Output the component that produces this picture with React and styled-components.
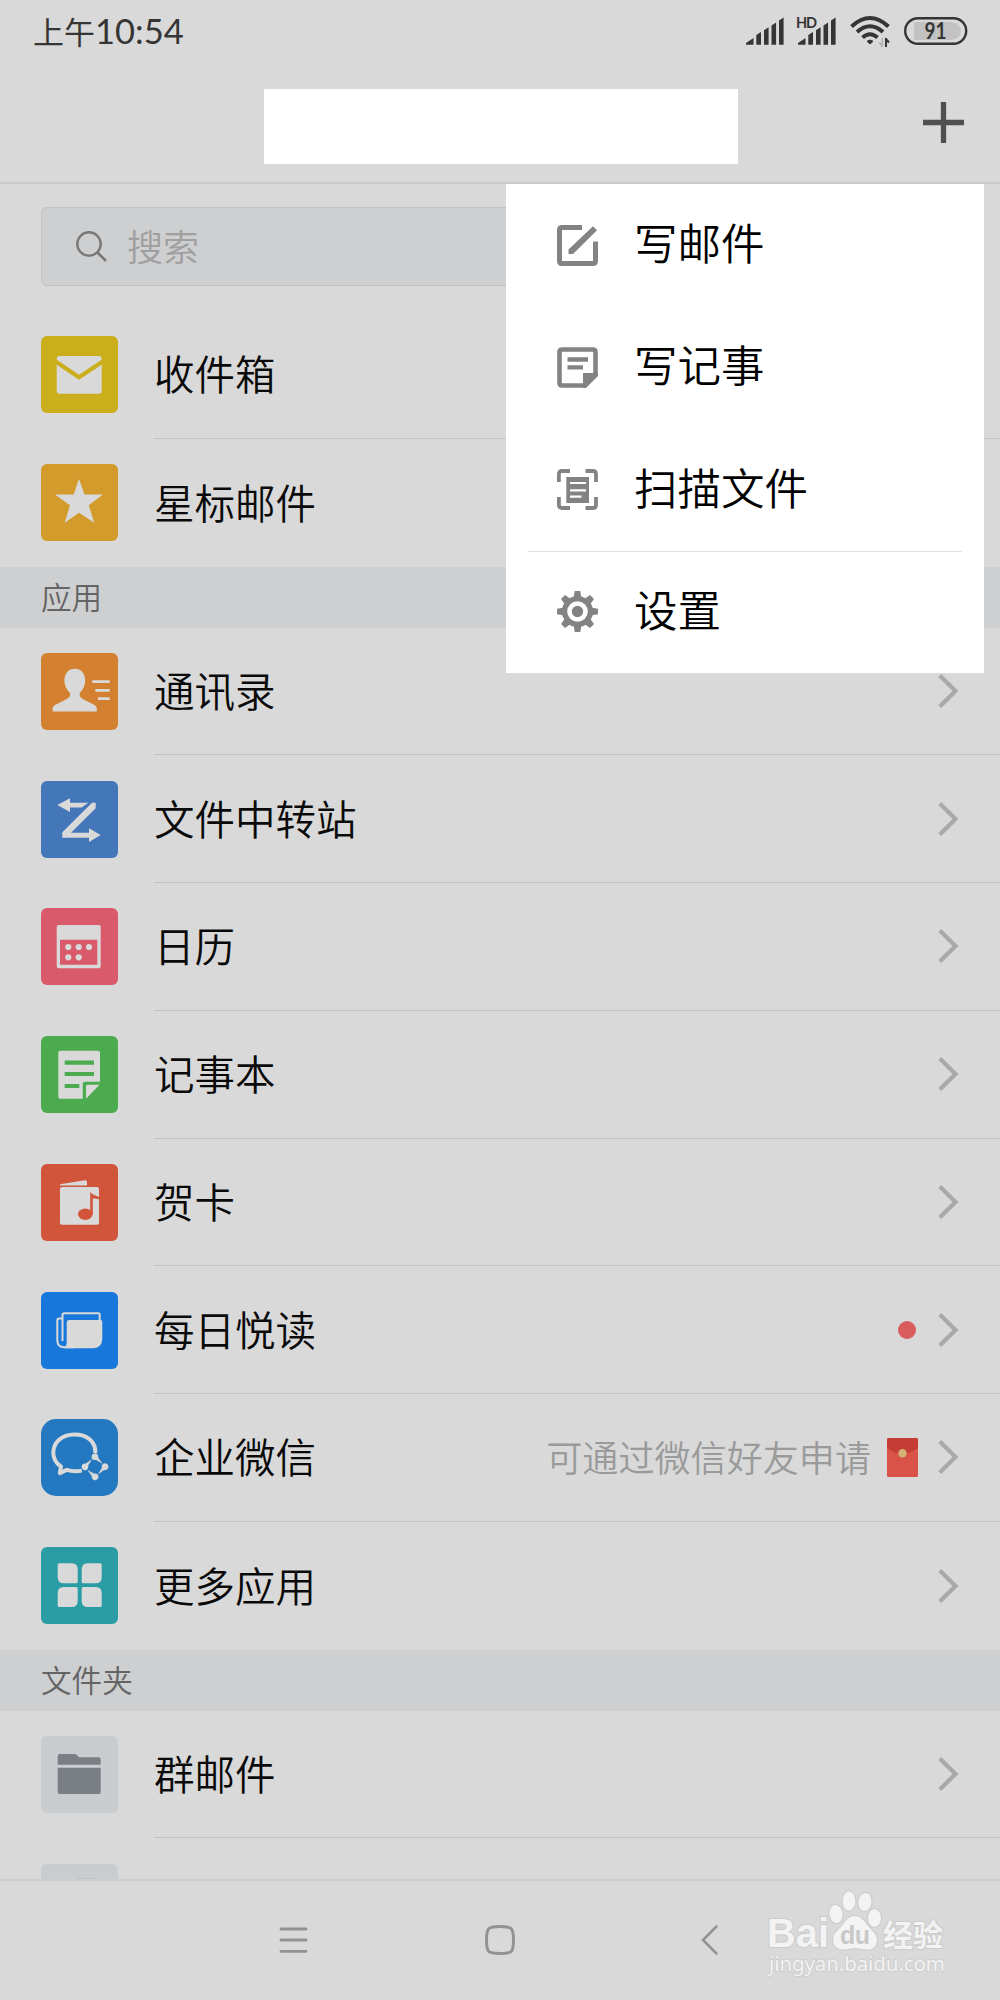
import styled, { createGlobalStyle } from "styled-components";

const GlobalStyle = createGlobalStyle`
  * {
    box-sizing: border-box;
  }
  body {
    margin: 0;
    background: #d9d9d9;
    font-family: "Noto Sans CJK SC", sans-serif;
    font-weight: 350;
  }
  svg {
    display: block;
    flex-shrink: 0;
  }
`;

const Screen = styled.div`
  position: relative;
  display: flex;
  flex-direction: column;
  width: 1000px;
  height: 2000px;
  overflow: hidden;
  background: #d9d9d9;
  color: #0a0a0a;
`;

const StatusBar = styled.div`
  display: flex;
  align-items: center;
  justify-content: space-between;
  height: 62px;
  padding: 0 32px 0 33px;
  color: #353535;
`;

const Clock = styled.div`
  display: flex;
  align-items: baseline;
  font-size: 31px;
  line-height: 62px;
  font-weight: 400;
`;

const Digits = styled.span`
  font-family: Lato, sans-serif;
  font-size: 34.5px;
`;

const StatusIcons = styled.div`
  display: flex;
  align-items: center;
`;

const Header = styled.header`
  display: flex;
  align-items: center;
  justify-content: space-between;
  height: 122px;
  padding: 6px 36px 5px 264px;
  border-bottom: 2px solid #c8c8c8;
`;

const TitleBlock = styled.div`
  width: 474px;
  height: 75px;
  margin-top: 8px;
  background: #fff;
`;

const Content = styled.main`
  flex: 1;
  min-height: 0;
  overflow: hidden;
`;

const SearchBox = styled.div`
  display: flex;
  align-items: center;
  gap: 20px;
  height: 79px;
  margin: 23px 41px 25px;
  padding: 0 0 1px 34px;
  border: 1px solid #c2c3c5;
  border-radius: 6px;
  background: #cecfd1;
  color: #9f9f9f;
  font-size: 36px;
`;

const SearchHint = styled.span`
  line-height: 50px;
  padding-bottom: 2px;
`;

const Section = styled.h2`
  display: flex;
  align-items: center;
  height: 61px;
  margin: 0;
  padding: 0 0 3px 41px;
  background: #cecfd1;
  color: #646464;
  font-size: 30.6px;
  font-weight: 350;
`;

const Row = styled.div`
  display: flex;
  align-items: center;
  height: 127.75px;
  padding-left: 41px;
`;

const Tile = styled.div`
  width: 77px;
  height: 77px;
  flex-shrink: 0;
  margin-right: 36px;
  border-radius: ${({ $radius }) => $radius || 6}px;
  background: ${({ $color }) => $color};
`;

const RowBody = styled.div`
  display: flex;
  flex: 1;
  align-items: center;
  height: 100%;
  padding-right: 41px;
  border-bottom: ${({ $last }) => ($last ? "none" : "1px solid #c2c2c2")};
`;

const RowLabel = styled.span`
  flex: 1;
  padding-bottom: 2px;
  font-size: 40.5px;
  line-height: 60px;
`;

const Note = styled.span`
  margin-right: 16px;
  padding-bottom: 2px;
  color: #9a9a9a;
  font-size: 36.1px;
`;

const Dot = styled.span`
  width: 18px;
  height: 18px;
  margin-right: 22px;
  border-radius: 50%;
  background: #d95c5c;
`;

const NavBar = styled.nav`
  display: flex;
  align-items: center;
  height: 121px;
  padding: 0 0 2px 279px;
  border-top: 2px solid #cdcdcd;
`;

const Spacer = styled.div`
  width: ${({ $width }) => $width}px;
`;

const Menu = styled.div`
  position: absolute;
  top: 184px;
  left: 506px;
  width: 478px;
  height: 489px;
  background: #fff;
  color: #000;
`;

const MenuItem = styled.div`
  display: flex;
  align-items: center;
  height: 122.25px;
  padding: 0 0 0 51px;
  font-size: 43.5px;
  gap: 36px;
`;

const MenuLabel = styled.span`
  line-height: 60px;
  padding-bottom: 6px;
`;

const MenuDivider = styled.div`
  height: 1px;
  margin: 0 22px -1px;
  background: #e2e2e2;
`;

const Watermark = styled.div`
  position: absolute;
  right: 49px;
  bottom: 17px;
`;

const light = "#d9d9d9";

const glyphs = {
  inbox: (
    <>
      <rect x="15.7" y="20" width="45" height="37.7" rx="3" fill={light} />
      <path d="M14 25 38 41.200 62.500 25" fill="none" stroke="#cbae1c" strokeWidth="4.200" />
    </>
  ),
  star: (
    <path
      d="M38 15l5.500 15.500H62L47.700 41.300l5.600 17.400L38 48.700 23.700 58.700 29 41.300 14 30.500h18.700z"
      fill={light}
    />
  ),
  contacts: (
    <>
      <path
        d="M33.800 15.700c6.200 0 10.400 4.800 10.400 11.500 0 5.500-2.400 9.500-5.500 12.800-.4 3.300 1 5 4 6.500l8.800 4.500c3 1.500 4.300 2.500 4.300 4.500v3H11.700v-3c0-2 1.300-3 4.300-4.500l8.800-4.500c3-1.500 4.800-3.200 4.300-6.500-3.300-3.300-5.700-7.300-5.700-12.800 0-6.700 4.200-11.500 10.400-11.500z"
        fill={light}
      />
      <path d="M51.300 28.700h17.400M54.300 37.300h14.400M57 45.700h11.700" stroke={light} strokeWidth="2.800" />
    </>
  ),
  transfer: (
    <>
      <path d="M16.300 24 29 17.300v4.400h18.300l-6.600 4.700H29V31z" fill={light} />
      <path
        d="M51 21.700h3.700v5.600L30 51.700h18v-4.400L59.700 54 48 61v-4.300H21.300v-5.400z"
        fill={light}
      />
    </>
  ),
  calendar: (
    <>
      <path
        fillRule="evenodd"
        d="M17.700 17h40a2 2 0 0 1 2 2v39.300a2 2 0 0 1-2 2h-40a2 2 0 0 1-2-2V19a2 2 0 0 1 2-2zM19 31.700v25h37.300v-25z"
        fill={light}
      />
      {[[27.3, 39], [37.7, 39], [48, 39], [27.3, 49.3], [37.7, 49.3]].map(([x, y]) => (
        <circle key={`${x}-${y}`} cx={x} cy={y} r="3.1" fill={light} />
      ))}
    </>
  ),
  notes: (
    <>
      <path
        d="M19.300 14.700H57a2 2 0 0 1 2 2v29H44a2.300 2.300 0 0 0-2.300 2.300v14.700H19.300a2 2 0 0 1-2-2v-44a2 2 0 0 1 2-2z"
        fill={light}
      />
      <path d="M45 50q0-1.300 1.300-1.300H58.500L45 62.700z" fill={light} />
      <path d="M23.700 26.700H53M23.700 38H53M23.700 50h14.600" stroke="#4dab4f" strokeWidth="4.200" />
    </>
  ),
  card: (
    <>
      <path d="M19 20.300 44 16.300q2-.2 2 1.700v3.500H19z" fill={light} />
      <rect x="19" y="23" width="39" height="37.700" rx="2" fill={light} />
      <ellipse cx="44.300" cy="50.300" rx="7.300" ry="5.700" fill="#d1553b" />
      <path
        d="M49.200 28c1.500 2.500 4.800 3 8.800 5v2.300c-2.500-.5-4-1-6.200-.9v16h-2.600z"
        fill="#d1553b"
      />
    </>
  ),
  daily: (
    <>
      <path
        d="M21 26.500h-2.800q-1.900 0-1.900 2V48q0 7.200 7 7.200h10M21.500 49V23q0-1.700 1.700-1.700h34q1.500 0 1.500 1.700v6"
        fill="none"
        stroke={light}
        strokeWidth="2"
      />
      <path
        d="M25.700 30.500q0-2.500 2.500-2.500h31.500q1.600 0 1.600 2v16q0 10.300-10 10.300H23c2-1.500 2.700-3.500 2.700-7z"
        fill={light}
      />
    </>
  ),
  wework: (
    <>
      <path
        d="M54.300 34C55 22.500 46 15.500 33.500 15.500 20 15.500 12.300 24 12.300 34c0 6 3 10.300 7.700 13.700l-1.200 6.500 7-3.300c4.200 1.400 10 1.600 15 .7"
        fill="none"
        stroke={light}
        strokeWidth="4"
        strokeLinejoin="round"
      />
      {[0, 90, 180, 270].map((angle) => (
        <path
          key={angle}
          transform={`rotate(${angle} 54 47.800)`}
          d="M51 39.500a3.400 3.400 0 1 1 6.200-.8l4.600 6.200-6.600-3.900c-2 .3-3.500-.2-4.200-1.500z"
          fill={light}
        />
      ))}
    </>
  ),
  more: (
    <path
      d="M18.200 16.300h12.500q6 0 6 6v12.500q0 1.500-1.500 1.500h-12.500q-6 0-6-6V17.800q0-1.500 1.500-1.500zM46.700 16.300h12.500q1.500 0 1.500 1.500v12.500q0 6-6 6H42.200q-1.500 0-1.500-1.500V22.300q0-6 6-6zM22.700 40h12.500q1.500 0 1.500 1.500V54q0 6-6 6H18.200q-1.500 0-1.500-1.500V46q0-6 6-6zM42.200 40h12.500q6 0 6 6v12.500q0 1.500-1.500 1.500H46.700q-6 0-6-6V41.500q0-1.500 1.500-1.500z"
      fill={light}
    />
  ),
  folder: (
    <path
      d="M18.700 18h15q1.500 0 2.300 1l2 2.200h19.700q2 0 2 2v5.500h-43V20q0-2 2-2zM16.700 31.700h43V56q0 2-2 2h-39q-2 0-2-2z"
      fill="#797f85"
    />
  ),
  hidden: <rect x="34" y="14.500" width="21" height="20" rx="2" fill="#b0b4b7" />,
};

const mailRows = [
  { label: "收件箱", icon: "inbox", color: "#cbae1c" },
  { label: "星标邮件", icon: "star", color: "#d39a2c" },
];

const appRows = [
  { label: "通讯录", icon: "contacts", color: "#d38130" },
  { label: "文件中转站", icon: "transfer", color: "#4476ba" },
  { label: "日历", icon: "calendar", color: "#d95a6b" },
  { label: "记事本", icon: "notes", color: "#4dab4f" },
  { label: "贺卡", icon: "card", color: "#d1553b" },
  { label: "每日悦读", icon: "daily", color: "#1877da", dot: true },
  {
    label: "企业微信",
    icon: "wework",
    color: "#2478bf",
    radius: 15,
    note: "可通过微信好友申请",
  },
  { label: "更多应用", icon: "more", color: "#2a9da4" },
];

const folderRows = [
  { label: "群邮件", icon: "folder", color: "#cacdd0" },
  { label: "", icon: "hidden", color: "#cacdd0" },
];

const menuItems = [
  {
    label: "写邮件",
    icon: (
      <>
        <path
          d="M25 2.500H5Q2.500 2.500 2.500 5v31q0 2.500 2.500 2.500h31q2.500 0 2.500-2.500V16.500"
          fill="none"
          stroke="#838383"
          strokeWidth="5"
        />
        <path d="M11.500 24.500 36 1.200l4 4L16 29h-4.500z" fill="#838383" />
      </>
    ),
  },
  {
    label: "写记事",
    icon: (
      <>
        <path
          d="M27 38.500H5Q2.500 38.500 2.500 36V5Q2.500 2.500 5 2.500h31q2.500 0 2.500 2.500v22.500"
          fill="none"
          stroke="#838383"
          strokeWidth="4.600"
        />
        <path d="M26 26h15v3L29 41h-3z" fill="#838383" />
        <path d="M10.500 12.500h20.500M10.500 20.300h15.500" stroke="#838383" strokeWidth="4.300" />
      </>
    ),
  },
  {
    label: "扫描文件",
    icon: (
      <>
        <path
          d="M1.900 13V5q0-3 3-3H13M28.500 2H36q3 0 3 3v8M39 28v8q0 3-3 3h-7.500M13 39H4.900q-3 0-3-3v-8"
          fill="none"
          stroke="#838383"
          strokeWidth="3.800"
        />
        <path d="M9.300 8H32v26H9.300z" fill="#838383" />
        <path d="M13 14h16M13 21.300h16M13 27.700h11.500" stroke="#fff" strokeWidth="2.200" />
      </>
    ),
  },
  {
    label: "设置",
    divider: true,
    icon: (
      <>
        {[0, 45, 90, 135].map((angle) => (
          <path
            key={angle}
            transform={`rotate(${angle} 20.500 20.500)`}
            d="M17.700 0h5.600l1.500 9v23l-1.500 9h-5.600l-1.500-9V9z"
            fill="#838383"
          />
        ))}
        <circle cx="20.500" cy="20.500" r="15.500" fill="#838383" />
        <circle cx="20.500" cy="20.500" r="8" fill="none" stroke="#fff" strokeWidth="4.600" />
      </>
    ),
  },
];

function Signal({ hd }) {
  return (
    <svg width={hd ? 41 : 38} height="30" viewBox={hd ? "-3 0 41 30" : "0 0 38 30"}>
      <path
        d="M0 28.700V27l7.500-5v6.700zM10.300 28.700V19l4.700-3v12.700zM18 28.700V14.300l4.600-3v17.400zM25.500 28.700V9.500l4.600-3v22.200zM33 28.700V4.500l4.600-3v27.200z"
        fill="currentColor"
      />
      {hd && (
        <text
          x="-2"
          y="11.500"
          fontFamily="Lato"
          fontSize="14.500"
          fontWeight="700"
          textLength="21"
          fill="currentColor"
        >
          HD
        </text>
      )}
    </svg>
  );
}

function Wifi() {
  return (
    <svg width="40" height="32" viewBox="0 0 40 32">
      <path
        d="M1.500 11.500Q20-5.500 38.500 11.500M7 17q13-11.500 26 0M12.500 22.500q7.500-6.500 15 0"
        fill="none"
        stroke="currentColor"
        strokeWidth="4"
      />
      <path d="M17 26.300q3-2.600 6 0L20 29z" fill="currentColor" stroke="currentColor" />
      <path d="M32.300 23v9M32.300 31.500l-3-4" stroke="#b5b5b5" strokeWidth="1.800" />
      <path d="M36 23v9M35.500 23.500l3.500 4" stroke="currentColor" strokeWidth="2" />
    </svg>
  );
}

function Battery() {
  return (
    <svg width="64" height="28" viewBox="0 0 64 28">
      <rect x="1.200" y="1.200" width="61" height="25.600" rx="12.800" fill="none" stroke="currentColor" strokeWidth="2.400" />
      <path d="M12 5h35q10 2 10 9t-10 9H12q-2 0-2-2V7q0-2 2-2z" fill="#c2c2c2" />
      <text
        x="31.500"
        y="22"
        fontFamily="Lato"
        fontSize="22"
        fontWeight="700"
        textAnchor="middle"
        textLength="22"
        lengthAdjust="spacingAndGlyphs"
        fill="currentColor"
      >
        91
      </text>
    </svg>
  );
}

function Chevron() {
  return (
    <svg width="21" height="34" viewBox="0 0 21 34">
      <path d="M1.800 1.500 17.500 17 1.800 32.500" fill="none" stroke="#a9a9ac" strokeWidth="4.200" />
    </svg>
  );
}

function RedPacket() {
  return (
    <svg width="31" height="39" viewBox="0 0 31 39">
      <rect width="31" height="39" rx="1.500" fill="#d95349" />
      <path d="M0 1.500Q0 0 1.500 0h28Q31 0 31 1.500V10q-15.500 11-31 0z" fill="#c43c33" />
      <circle cx="15.500" cy="15.300" r="4.200" fill="#d2b272" />
    </svg>
  );
}

function ListRow({ item, last }) {
  return (
    <Row>
      <Tile $color={item.color} $radius={item.radius}>
        <svg width="77" height="77" viewBox="0 0 77 77">
          {glyphs[item.icon]}
        </svg>
      </Tile>
      <RowBody $last={last}>
        <RowLabel>{item.label}</RowLabel>
        {item.dot && <Dot />}
        {item.note && (
          <>
            <Note>{item.note}</Note>
            <RedPacket />
            <Spacer $width={20} />
          </>
        )}
        <Chevron />
      </RowBody>
    </Row>
  );
}

function List({ rows }) {
  return rows.map((item, index) => (
    <ListRow key={item.icon} item={item} last={index === rows.length - 1} />
  ));
}

function BaiduMark() {
  const outlined = {
    fill: "#f3f3f3",
    stroke: "#cbcbcb",
    strokeWidth: 2,
    paintOrder: "stroke",
  };
  return (
    <svg width="184" height="96" viewBox="0 0 184 96">
      <text x="0" y="60" fontFamily="Liberation Sans" fontWeight="700" fontSize="41" textLength="62" lengthAdjust="spacingAndGlyphs" {...outlined}>
        Bai
      </text>
      <g {...outlined}>
        <ellipse cx="69" cy="27" rx="6.500" ry="9" transform="rotate(-8 69 27)" />
        <ellipse cx="82" cy="14" rx="6.500" ry="9.500" />
        <ellipse cx="98" cy="15" rx="6.500" ry="9" transform="rotate(8 98 15)" />
        <ellipse cx="107.500" cy="31" rx="6.500" ry="9" />
        <path d="M88 29c7 0 9 5 13 10 5 6 9 8 9 14 0 7-5 10-11 9.500-4-.3-7-1.500-11-1.500s-6 1.200-10 1.500c-7 .5-12-3-12-10 0-6 5-9 9-14 4-5 6-9.500 13-9.500z" />
      </g>
      <text x="73" y="57" fontFamily="Liberation Sans" fontWeight="700" fontSize="25" textLength="30" fill="#c8c8c8">
        du
      </text>
      <text x="116" y="59" fontFamily="Noto Sans CJK SC" fontWeight="700" fontSize="30" textLength="60" {...outlined}>
        经验
      </text>
      <text x="2" y="84" fontFamily="Noto Sans" fontWeight="400" fontSize="20.500" textLength="176" {...outlined} strokeWidth="1.500">
        jingyan.baidu.com
      </text>
    </svg>
  );
}

export default function App() {
  return (
    <>
      <GlobalStyle />
      <Screen>
        <StatusBar>
          <Clock>
            上午<Digits>10:54</Digits>
          </Clock>
          <StatusIcons>
            <Signal />
            <Spacer $width={11} />
            <Signal hd />
            <Spacer $width={14} />
            <Wifi />
            <Spacer $width={14} />
            <Battery />
          </StatusIcons>
        </StatusBar>
        <Header>
          <TitleBlock />
          <svg width="41" height="41" viewBox="0 0 41 41">
            <path d="M20.500 0v41M0 20.500h41" stroke="#505050" strokeWidth="5.300" />
          </svg>
        </Header>
        <Content>
          <SearchBox>
            <svg width="31" height="31" viewBox="0 0 31 31">
              <circle cx="13" cy="13" r="11.700" fill="none" stroke="#787878" strokeWidth="2.400" />
              <path d="M21.500 21.500 30 30" stroke="#787878" strokeWidth="2.600" />
            </svg>
            <SearchHint>搜索</SearchHint>
          </SearchBox>
          <List rows={mailRows} />
          <Section>应用</Section>
          <List rows={appRows} />
          <Section>文件夹</Section>
          <List rows={folderRows} />
        </Content>
        <NavBar>
          <svg width="29" height="28" viewBox="0 0 29 28">
            <path d="M2 3h25M2 14h25M2 25.300h25" stroke="#929292" strokeWidth="2.800" strokeLinecap="round" />
          </svg>
          <Spacer $width={177} />
          <svg width="30" height="30" viewBox="0 0 30 30">
            <path
              d="M15 1.500c11.500 0 13.500 1 13.500 13.500S27 28.500 15 28.500 1.500 27.500 1.500 15 3.500 1.500 15 1.500z"
              fill="none"
              stroke="#929292"
              strokeWidth="3"
            />
          </svg>
          <Spacer $width={186} />
          <svg width="17" height="30" viewBox="0 0 17 30">
            <path d="M15.500 1.500 2 15l13.500 13.500" fill="none" stroke="#929292" strokeWidth="2.500" strokeLinecap="round" />
          </svg>
        </NavBar>
        <Menu>
          {menuItems.map((item) => (
            <div key={item.label}>
              {item.divider && <MenuDivider />}
              <MenuItem>
                <svg width="41" height="41" viewBox="0 0 41 41">
                  {item.icon}
                </svg>
                <MenuLabel>{item.label}</MenuLabel>
              </MenuItem>
            </div>
          ))}
        </Menu>
        <Watermark>
          <BaiduMark />
        </Watermark>
      </Screen>
    </>
  );
}
